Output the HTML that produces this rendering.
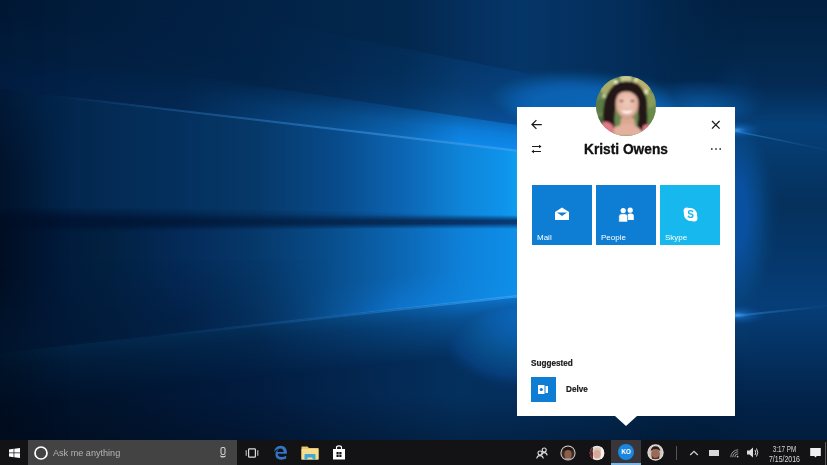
<!DOCTYPE html>
<html><head><meta charset="utf-8">
<style>
html,body{margin:0;padding:0;width:827px;height:465px;overflow:hidden;background:#0a2a52;font-family:"Liberation Sans",sans-serif;}
#wp{position:absolute;left:0;top:0;width:827px;height:440px;}
#flyout{position:absolute;left:517px;top:107px;width:218px;height:309px;background:#fff;}
#arrow{position:absolute;left:615px;top:416px;width:0;height:0;border-left:11px solid transparent;border-right:11px solid transparent;border-top:10px solid #fff;}
#tb{position:absolute;left:0;top:440px;width:827px;height:25px;background:#131315;}
.abs{position:absolute;}
.tile{position:absolute;top:185px;width:60px;height:60px;background:#0e7ed4;}
.tile span{position:absolute;left:5px;bottom:3.5px;color:#fff;font-size:8px;}
.name{position:absolute;left:517px;width:218px;top:140px;text-align:center;font-weight:bold;font-size:15px;color:#111;-webkit-text-stroke:0.35px #111;transform:scaleX(0.915);}
</style></head><body>
<svg id="wp" width="827" height="440" viewBox="0 0 827 440">
<defs>
<linearGradient id="gBase" x1="0" y1="0" x2="827" y2="0" gradientUnits="userSpaceOnUse"><stop offset="0.0000" stop-color="#011630"/><stop offset="0.1270" stop-color="#011c3c"/><stop offset="0.3083" stop-color="#022246"/><stop offset="0.4897" stop-color="#03284e"/><stop offset="0.5562" stop-color="#042e5c"/><stop offset="0.6288" stop-color="#053668"/><stop offset="0.7316" stop-color="#042e5c"/><stop offset="0.8888" stop-color="#022446"/><stop offset="1.0000" stop-color="#022042"/></linearGradient>
<linearGradient id="gBandA" x1="0" y1="0" x2="827" y2="0" gradientUnits="userSpaceOnUse"><stop offset="0.0000" stop-color="#021c3c"/><stop offset="0.3083" stop-color="#022449"/><stop offset="0.4051" stop-color="#042c58"/><stop offset="0.4897" stop-color="#05386c"/><stop offset="0.5562" stop-color="#0a4c8a"/><stop offset="0.6288" stop-color="#0a50a0"/><stop offset="1.0000" stop-color="#0a50a0"/></linearGradient>
<linearGradient id="gBandB" x1="0" y1="0" x2="827" y2="0" gradientUnits="userSpaceOnUse"><stop offset="0.0000" stop-color="#021e44"/><stop offset="0.2177" stop-color="#032852"/><stop offset="0.4051" stop-color="#084e8e"/><stop offset="0.4837" stop-color="#0c66b4"/><stop offset="0.5562" stop-color="#0e88ea"/><stop offset="0.6288" stop-color="#0e8cee"/><stop offset="1.0000" stop-color="#0e91f5"/></linearGradient>
<linearGradient id="gUp" x1="0" y1="0" x2="827" y2="0" gradientUnits="userSpaceOnUse"><stop offset="0.0000" stop-color="#021a3a"/><stop offset="0.0605" stop-color="#02244a"/><stop offset="0.1270" stop-color="#042a53"/><stop offset="0.2177" stop-color="#04305e"/><stop offset="0.3083" stop-color="#063868"/><stop offset="0.4051" stop-color="#084a8a"/><stop offset="0.4897" stop-color="#0c66b4"/><stop offset="0.5562" stop-color="#0e84d8"/><stop offset="0.6106" stop-color="#0e94eb"/><stop offset="0.6288" stop-color="#10a0f0"/><stop offset="1.0000" stop-color="#10a0f0"/></linearGradient>
<linearGradient id="gDark" x1="0" y1="0" x2="827" y2="0" gradientUnits="userSpaceOnUse"><stop offset="0.0000" stop-color="#011230"/><stop offset="0.0605" stop-color="#011230"/><stop offset="0.2177" stop-color="#011a3c"/><stop offset="0.4897" stop-color="#082c5a"/><stop offset="0.6288" stop-color="#0a3c78"/><stop offset="1.0000" stop-color="#0a3c78"/></linearGradient>
<linearGradient id="gLow" x1="0" y1="0" x2="827" y2="0" gradientUnits="userSpaceOnUse"><stop offset="0.0000" stop-color="#00122c"/><stop offset="0.0605" stop-color="#011a3c"/><stop offset="0.1270" stop-color="#022040"/><stop offset="0.2177" stop-color="#042a58"/><stop offset="0.3083" stop-color="#06386a"/><stop offset="0.4051" stop-color="#084f8e"/><stop offset="0.4897" stop-color="#0c68b6"/><stop offset="0.5562" stop-color="#0e80d8"/><stop offset="0.6106" stop-color="#0e8ce6"/><stop offset="0.6288" stop-color="#0e90ea"/><stop offset="1.0000" stop-color="#0e90ea"/></linearGradient>
<linearGradient id="gBot" x1="0" y1="0" x2="827" y2="0" gradientUnits="userSpaceOnUse"><stop offset="0.0000" stop-color="#011028"/><stop offset="0.1270" stop-color="#01142e"/><stop offset="0.2237" stop-color="#011838"/><stop offset="0.3083" stop-color="#021c40"/><stop offset="0.4051" stop-color="#03244c"/><stop offset="0.5562" stop-color="#04305e"/><stop offset="0.6288" stop-color="#042e5c"/><stop offset="0.7255" stop-color="#032a54"/><stop offset="0.8888" stop-color="#021e3e"/><stop offset="1.0000" stop-color="#021e3e"/></linearGradient>
<linearGradient id="gBotGlow" x1="0" y1="0" x2="827" y2="0" gradientUnits="userSpaceOnUse"><stop offset="0.0000" stop-color="#02203f"/><stop offset="0.3083" stop-color="#04305a"/><stop offset="0.4897" stop-color="#0a5aa0"/><stop offset="0.5562" stop-color="#0c6cc0"/><stop offset="0.6288" stop-color="#0e78d0"/><stop offset="1.0000" stop-color="#0e78d0"/></linearGradient>
<linearGradient id="gRight" x1="0" y1="0" x2="0" y2="440" gradientUnits="userSpaceOnUse"><stop offset="0.0000" stop-color="#022042"/><stop offset="0.0795" stop-color="#022446"/><stop offset="0.1932" stop-color="#042a54"/><stop offset="0.2841" stop-color="#054078"/><stop offset="0.4659" stop-color="#05305c"/><stop offset="0.6932" stop-color="#063e78"/><stop offset="0.9205" stop-color="#022248"/><stop offset="1.0000" stop-color="#021e3e"/></linearGradient>
<linearGradient id="mBand" x1="4.72" y1="49.8" x2="0" y2="89.5" gradientUnits="userSpaceOnUse"><stop offset="0" stop-color="#fff" stop-opacity="0"/><stop offset="0.35" stop-color="#fff" stop-opacity="0.45"/><stop offset="0.62" stop-color="#fff" stop-opacity="0.78"/><stop offset="1" stop-color="#fff" stop-opacity="1"/></linearGradient>
<radialGradient id="mDark2" cx="0" cy="0" r="1" gradientUnits="userSpaceOnUse" gradientTransform="translate(-450 220) scale(1000 15)"><stop offset="0" stop-color="#fff" stop-opacity="1"/><stop offset="0.45" stop-color="#fff" stop-opacity="1"/><stop offset="1" stop-color="#fff" stop-opacity="0"/></radialGradient>
<linearGradient id="gDark2" x1="0" y1="0" x2="827" y2="0" gradientUnits="userSpaceOnUse"><stop offset="0.0000" stop-color="#011230"/><stop offset="0.2177" stop-color="#011a3c"/><stop offset="0.4897" stop-color="#04305a"/><stop offset="1.0000" stop-color="#04305a"/></linearGradient>
<linearGradient id="mDark" x1="0" y1="215" x2="0" y2="229" gradientUnits="userSpaceOnUse"><stop offset="0" stop-color="#fff" stop-opacity="0"/><stop offset="0.4" stop-color="#fff" stop-opacity="1"/><stop offset="0.6" stop-color="#fff" stop-opacity="1"/><stop offset="1" stop-color="#fff" stop-opacity="0"/></linearGradient>
<linearGradient id="mBotGlow" x1="0" y1="353" x2="6.1" y2="407.7" gradientUnits="userSpaceOnUse"><stop offset="0" stop-color="#fff" stop-opacity="1"/><stop offset="0.3" stop-color="#fff" stop-opacity="0.55"/><stop offset="1" stop-color="#fff" stop-opacity="0"/></linearGradient>
<linearGradient id="mRight" x1="640" y1="0" x2="745" y2="0" gradientUnits="userSpaceOnUse"><stop offset="0" stop-color="#fff" stop-opacity="0"/><stop offset="1" stop-color="#fff" stop-opacity="1"/></linearGradient>
<linearGradient id="mVig" x1="0" y1="100" x2="0" y2="170" gradientUnits="userSpaceOnUse"><stop offset="0" stop-color="#fff" stop-opacity="0.2"/><stop offset="1" stop-color="#fff" stop-opacity="1"/></linearGradient>
<linearGradient id="mLowShade" x1="0" y1="270" x2="5" y2="335" gradientUnits="userSpaceOnUse"><stop offset="0" stop-color="#fff" stop-opacity="0"/><stop offset="1" stop-color="#fff" stop-opacity="0.8"/></linearGradient>
<linearGradient id="gLowShade" x1="0" y1="0" x2="827" y2="0" gradientUnits="userSpaceOnUse"><stop offset="0.0000" stop-color="#011630" stop-opacity="0.9"/><stop offset="0.2237" stop-color="#021e42" stop-opacity="0.9"/><stop offset="0.3990" stop-color="#03284e" stop-opacity="0"/></linearGradient>
<linearGradient id="mLowGlow" x1="0" y1="318" x2="3.9" y2="353" gradientUnits="userSpaceOnUse"><stop offset="0" stop-color="#fff" stop-opacity="0"/><stop offset="1" stop-color="#fff" stop-opacity="1"/></linearGradient>
<linearGradient id="gLowGlow" x1="0" y1="0" x2="827" y2="0" gradientUnits="userSpaceOnUse"><stop offset="0.0000" stop-color="#06305e" stop-opacity="0"/><stop offset="0.3023" stop-color="#06305e" stop-opacity="0"/><stop offset="0.4837" stop-color="#0e74cc"/><stop offset="0.6288" stop-color="#1090ea"/><stop offset="1.0000" stop-color="#1090ea"/></linearGradient>
<linearGradient id="mBandA" x1="400" y1="50.8" x2="390.1" y2="105.9" gradientUnits="userSpaceOnUse"><stop offset="0" stop-color="#fff" stop-opacity="0.3"/><stop offset="0.5" stop-color="#fff" stop-opacity="0.5"/><stop offset="1" stop-color="#fff" stop-opacity="1"/></linearGradient>
<mask id="maskBandA" maskUnits="userSpaceOnUse" x="-20" y="-20" width="867" height="480"><rect x="-20" y="-20" width="867" height="480" fill="url(#mBandA)"/></mask>
<mask id="maskBand" maskUnits="userSpaceOnUse" x="-20" y="-20" width="867" height="480"><rect x="-20" y="-20" width="867" height="480" fill="url(#mBand)"/></mask>
<mask id="maskDark" maskUnits="userSpaceOnUse" x="-20" y="-20" width="867" height="480"><rect x="-20" y="-20" width="867" height="480" fill="url(#mDark)"/></mask>
<mask id="maskBotGlow" maskUnits="userSpaceOnUse" x="-20" y="-20" width="867" height="480"><rect x="-20" y="-20" width="867" height="480" fill="url(#mBotGlow)"/></mask>
<mask id="maskDark2" maskUnits="userSpaceOnUse" x="-20" y="-20" width="867" height="480"><rect x="-20" y="-20" width="867" height="480" fill="url(#mDark2)"/></mask>
<mask id="maskRight" maskUnits="userSpaceOnUse" x="-20" y="-20" width="867" height="480"><rect x="-20" y="-20" width="867" height="480" fill="url(#mRight)"/></mask>
<mask id="maskVig" maskUnits="userSpaceOnUse" x="-20" y="-20" width="867" height="480"><rect x="-20" y="-20" width="867" height="480" fill="url(#mVig)"/></mask>
<mask id="maskLowShade" maskUnits="userSpaceOnUse" x="-20" y="-20" width="867" height="480"><rect x="-20" y="-20" width="867" height="480" fill="url(#mLowShade)"/></mask>
<mask id="maskLowGlow" maskUnits="userSpaceOnUse" x="-20" y="-20" width="867" height="480"><rect x="-20" y="-20" width="867" height="480" fill="url(#mLowGlow)"/></mask>
<radialGradient id="glow" cx="0.5" cy="0.5" r="0.5"><stop offset="0" stop-color="#4aa8f8" stop-opacity="0.8"/><stop offset="0.35" stop-color="#1a78d8" stop-opacity="0.45"/><stop offset="1" stop-color="#0a50a0" stop-opacity="0"/></radialGradient>
<radialGradient id="logo" cx="0.5" cy="0.5" r="0.5"><stop offset="0" stop-color="#0c66b8"/><stop offset="0.45" stop-color="#0a62b0"/><stop offset="0.55" stop-color="#0a5aa8"/><stop offset="0.68" stop-color="#074a88"/><stop offset="0.8" stop-color="#053a6c"/><stop offset="1" stop-color="#032a52" stop-opacity="0"/></radialGradient>
<radialGradient id="logo3" cx="0.5" cy="0.5" r="0.5"><stop offset="0" stop-color="#0a5aa8"/><stop offset="0.4" stop-color="#084a88"/><stop offset="0.85" stop-color="#043262"/><stop offset="1" stop-color="#043262" stop-opacity="0"/></radialGradient>
<radialGradient id="logo2" cx="0.5" cy="0.5" r="0.5"><stop offset="0" stop-color="#0c66b8"/><stop offset="0.3" stop-color="#0a5aa4"/><stop offset="0.5" stop-color="#08508e"/><stop offset="0.75" stop-color="#063e7a"/><stop offset="1" stop-color="#042854" stop-opacity="0"/></radialGradient>
<radialGradient id="logoR" cx="0.5" cy="0.5" r="0.5"><stop offset="0" stop-color="#0a50a0"/><stop offset="0.2" stop-color="#0a50a0"/><stop offset="0.5" stop-color="#07447e"/><stop offset="1" stop-color="#05305c" stop-opacity="0"/></radialGradient>
<linearGradient id="lnUp" x1="48" y1="0" x2="520" y2="0" gradientUnits="userSpaceOnUse"><stop offset="0" stop-color="#2a70b8" stop-opacity="0"/><stop offset="0.3" stop-color="#2a70b8" stop-opacity="0.45"/><stop offset="1" stop-color="#3aa0f0" stop-opacity="0.9"/></linearGradient>
<linearGradient id="lnLow" x1="150" y1="0" x2="520" y2="0" gradientUnits="userSpaceOnUse"><stop offset="0" stop-color="#2a70b8" stop-opacity="0"/><stop offset="0.5" stop-color="#2a80d0" stop-opacity="0.5"/><stop offset="1" stop-color="#40b0ff" stop-opacity="0.95"/></linearGradient>
<filter id="bd" x="-5%" y="-100%" width="110%" height="300%"><feGaussianBlur stdDeviation="2.2"/></filter>
<linearGradient id="lnR" x1="735" y1="0" x2="827" y2="0" gradientUnits="userSpaceOnUse"><stop offset="0" stop-color="#3a9ae8" stop-opacity="0.55"/><stop offset="1" stop-color="#2a70b8" stop-opacity="0.05"/></linearGradient>
<linearGradient id="botDark" x1="0" y1="395" x2="0" y2="440" gradientUnits="userSpaceOnUse"><stop offset="0" stop-color="#000814" stop-opacity="0"/><stop offset="1" stop-color="#000814" stop-opacity="0.3"/></linearGradient>
<linearGradient id="vig" x1="0" y1="0" x2="70" y2="0" gradientUnits="userSpaceOnUse"><stop offset="0" stop-color="#000a18" stop-opacity="0.45"/><stop offset="1" stop-color="#000a18" stop-opacity="0"/></linearGradient>
</defs>
  <rect width="827" height="440" fill="url(#gBase)"/>
  <polygon points="-20,-37 847,138 847,190 -20,87" fill="url(#gBandA)" mask="url(#maskBandA)"/>
  <polygon points="-20,43.5 847,175 847,190 -20,87" fill="url(#gBandB)" mask="url(#maskBand)"/>
  <polygon points="-20,87 847,190 847,219 -20,219" fill="url(#gUp)"/>
  <polygon points="-20,219 847,219 847,277 -20,355" fill="url(#gLow)"/>
  <rect x="-20" y="205" width="867" height="35" fill="url(#gDark)" mask="url(#maskDark)"/>
  <rect x="-20" y="190" width="867" height="60" fill="url(#gDark2)" mask="url(#maskDark2)"/>
  <polygon points="-20,250 847,250 847,260 -20,355" fill="url(#gLowGlow)" mask="url(#maskLowGlow)" style="mix-blend-mode:lighten"/>
  <polygon points="-20,355 847,260 847,460 -20,460" fill="url(#gBot)"/>
  <polygon points="-20,355 847,260 847,460 -20,460" fill="url(#gBotGlow)" mask="url(#maskBotGlow)"/>
  <line x1="30" y1="93" x2="520" y2="151" stroke="url(#lnUp)" stroke-width="2.2"/>
  <line x1="150" y1="337" x2="520" y2="296" stroke="url(#lnLow)" stroke-width="2.5" opacity="0.7"/>
  <rect x="0" y="0" width="70" height="440" fill="url(#vig)" mask="url(#maskVig)"/>
  <rect x="0" y="395" width="827" height="45" fill="url(#botDark)"/>
  <polygon points="-20,260 400,260 400,308 -20,355" fill="url(#gLowShade)" mask="url(#maskLowShade)"/>
  <rect x="640" y="0" width="187" height="440" fill="url(#gRight)" mask="url(#maskRight)"/>
  <ellipse cx="0" cy="0" rx="150" ry="48" fill="url(#logo)" style="mix-blend-mode:lighten" transform="translate(600 114) rotate(8)"/>
  <ellipse cx="700" cy="110" rx="80" ry="30" fill="url(#logo3)" style="mix-blend-mode:lighten"/>
  <ellipse cx="517" cy="316" rx="95" ry="80" fill="url(#logo2)" style="mix-blend-mode:lighten"/>
  <ellipse cx="737" cy="215" rx="48" ry="160" fill="url(#logoR)" style="mix-blend-mode:lighten"/>
  <line x1="735" y1="316" x2="827" y2="306" stroke="url(#lnR)" stroke-width="2"/>
  <line x1="735" y1="131" x2="827" y2="150" stroke="url(#lnR)" stroke-width="1.5"/>
  <ellipse cx="737" cy="130" rx="26" ry="9" fill="url(#glow)"/>
  <ellipse cx="737" cy="315" rx="30" ry="10" fill="url(#glow)"/>
</svg>
<div id="flyout"></div>
<div id="arrow"></div>

<!-- profile picture -->
<svg class="abs" style="left:596px;top:76px" width="60" height="60" viewBox="0 0 60 60">
  <defs>
    <clipPath id="cc"><circle cx="30" cy="30" r="30"/></clipPath>
    <filter id="pb" x="-10%" y="-10%" width="120%" height="120%"><feGaussianBlur stdDeviation="0.8"/></filter>
    <radialGradient id="face" cx="0.5" cy="0.45" r="0.55"><stop offset="0" stop-color="#f0cbbb"/><stop offset="0.75" stop-color="#e4b4a0"/><stop offset="1" stop-color="#c89482"/></radialGradient>
  </defs>
  <g clip-path="url(#cc)">
    <rect width="60" height="60" fill="#6a8650"/>
    <g filter="url(#pb)">
      <circle cx="12" cy="10" r="9" fill="#a8ac6a"/>
      <circle cx="46" cy="8" r="10" fill="#b8b070"/>
      <circle cx="53" cy="24" r="8" fill="#8a9a58"/>
      <circle cx="5" cy="30" r="7" fill="#5c7a44"/>
      <circle cx="55" cy="40" r="7" fill="#6a8a48"/>
      <circle cx="6" cy="46" r="6" fill="#4e6a3c"/>
      <circle cx="30" cy="2" r="6" fill="#c8c890"/>
      <circle cx="20" cy="6" r="2.2" fill="#f0ecd0"/>
      <circle cx="40" cy="4" r="2" fill="#e8e0b0"/>
      <circle cx="50" cy="16" r="2.2" fill="#f0e8b8"/>
      <circle cx="8" cy="20" r="1.8" fill="#e0e0c0"/>
      <path d="M8 52 Q4 22 18 9 Q30 2 42 8 Q53 18 51 34 Q53 48 48 56 L40 56 Q45 40 41 30 L20 30 Q16 44 20 56Z" fill="#241814"/>
      <path d="M31 42 L25 42 L22 60 L42 60 L38 42Z" fill="#dca892"/>
      <ellipse cx="31" cy="28" rx="11.5" ry="15" fill="url(#face)"/>
      <path d="M19 22 Q23 10 34 11 Q42 14 43 24 Q38 15 30 15.5 Q22 16 19 22Z" fill="#241814"/>
      <path d="M12 60 Q15 49 31 48 Q45 49 48 60Z" fill="#e2b09c"/>
      <path d="M2 60 L7 46 Q13 45 17 50 L19 60Z" fill="#e27a88"/>
      <path d="M45 60 L47 50 Q51 47 55 50 L58 60Z" fill="#e27a88"/>
      <ellipse cx="25.5" cy="25" rx="2" ry="1" fill="#5a3a30"/>
      <ellipse cx="36.5" cy="25" rx="2" ry="1" fill="#5a3a30"/>
      <path d="M24 34 Q31 41 38 34 Q31 36.5 24 34Z" fill="#fff"/>
    </g>
  </g>
</svg>
<!-- header icons -->
<svg class="abs" style="left:530px;top:119px" width="14" height="12" viewBox="0 0 14 12">
  <path d="M2.2 5.5H11.8M6.4 1.1L2 5.5L6.4 9.9" stroke="#1a1a1a" stroke-width="1.25" fill="none"/>
</svg>
<svg class="abs" style="left:709px;top:118px" width="13" height="13" viewBox="0 0 13 13">
  <path d="M3 3L10.6 10.6M10.6 3L3 10.6" stroke="#1a1a1a" stroke-width="1.25" fill="none"/>
</svg>
<svg class="abs" style="left:530px;top:143px" width="13" height="12" viewBox="0 0 13 12">
  <path d="M2 3.5H10M3 8.5H11" stroke="#1a1a1a" stroke-width="1.2" fill="none"/>
  <path d="M9 1.8L11.6 3.5L9 5.2Z M4 6.8L1.4 8.5L4 10.2Z" fill="#1a1a1a"/>
</svg>
<div class="name">Kristi Owens</div>
<svg class="abs" style="left:709px;top:146px" width="14" height="6" viewBox="0 0 14 6">
  <circle cx="2.8" cy="3" r="0.95" fill="#444"/><circle cx="7" cy="3" r="0.95" fill="#444"/><circle cx="11.2" cy="3" r="0.95" fill="#444"/>
</svg>

<!-- tiles -->
<div class="tile" style="left:532px"><span>Mail</span>
  <svg class="abs" style="left:22px;top:22px" width="16" height="14" viewBox="0 0 16 14">
    <path d="M1 5L8 0.5L15 5V13H1Z" fill="#fff"/>
    <path d="M3 5.5H13L8 9Z" fill="#0e7ed4"/>
  </svg>
</div>
<div class="tile" style="left:596px"><span>People</span>
  <svg class="abs" style="left:22px;top:22px" width="17" height="16" viewBox="0 0 17 16">
    <circle cx="12.2" cy="3.2" r="2.6" fill="#fff"/>
    <path d="M9.5 13V8.6Q9.5 6.4 11.8 6.4H13Q15.8 6.4 15.8 9.2V13Z" fill="#fff"/>
    <circle cx="5.2" cy="3.6" r="3" fill="#0e7ed4"/>
    <circle cx="5.2" cy="3.6" r="2.6" fill="#fff"/>
    <path d="M0.8 15V9.6Q0.8 6.8 3.6 6.8H6.8Q9.6 6.8 9.6 9.6V15Z" fill="#fff" stroke="#0e7ed4" stroke-width="0.6"/>
  </svg>
</div>
<div class="tile" style="left:660px;background:#16b8ee"><span>Skype</span>
  <svg class="abs" style="left:23px;top:22px" width="15" height="15" viewBox="0 0 15 15">
    <path d="M4 0.5A3.5 3.5 0 0 0 0.5 4Q0.5 5 1 6A7 7 0 0 0 9 14Q10 14.5 11 14.5A3.5 3.5 0 0 0 14.5 11Q14.5 10 14 9A7 7 0 0 0 6 1Q5 0.5 4 0.5Z" fill="#fff"/>
    <text x="7.5" y="11" text-anchor="middle" font-family="Liberation Sans" font-weight="bold" font-size="10" fill="#16b8ee">S</text>
  </svg>
</div>

<div class="abs" style="left:531px;top:357.5px;font-size:8.6px;font-weight:bold;color:#1a1a1a;-webkit-text-stroke:0.2px #1a1a1a;transform:scaleX(0.95);transform-origin:left">Suggested</div>
<div class="abs" style="left:531px;top:377px;width:25px;height:25px;background:#0e7ed4">
  <svg class="abs" style="left:7px;top:7px" width="11" height="11" viewBox="0 0 11 11">
    <rect x="0" y="1" width="6.5" height="9" fill="#fff"/>
    <rect x="7.5" y="2" width="2.5" height="7" fill="#fff"/>
    <circle cx="3.3" cy="5.5" r="1.6" fill="#0e7ed4"/>
  </svg>
</div>
<div class="abs" style="left:566px;top:384px;font-size:8.6px;font-weight:bold;color:#1a1a1a;-webkit-text-stroke:0.2px #1a1a1a;transform:scaleX(0.95);transform-origin:left">Delve</div>

<!-- taskbar -->
<div id="tb">
  <svg class="abs" style="left:9px;top:8px" width="11" height="10" viewBox="0 0 11 10">
    <path d="M0 1.4L4.6 0.8V4.6H0ZM5.3 0.7L11 0V4.6H5.3ZM0 5.3H4.6V9.2L0 8.6ZM5.3 5.3H11V10L5.3 9.3Z" fill="#fff"/>
  </svg>
  <div class="abs" style="left:28px;top:0;width:209px;height:25px;background:#434343"></div>
  <svg class="abs" style="left:34px;top:6px" width="14" height="14" viewBox="0 0 14 14">
    <circle cx="7" cy="7" r="6" stroke="#fff" stroke-width="1.7" fill="none"/>
  </svg>
  <div class="abs" style="left:53px;top:8px;font-size:9.1px;color:#b4b4b4">Ask me anything</div>
  <svg class="abs" style="left:219px;top:7px" width="8" height="11" viewBox="0 0 8 11">
    <rect x="2" y="0.5" width="4" height="7" rx="1.6" stroke="#cfcfcf" stroke-width="1.1" fill="none"/>
    <path d="M1 8.2Q1.2 10.5 4 10.5Q6.8 10.5 7 8.2Q5.5 9.2 4 9.2Q2.5 9.2 1 8.2Z" fill="#dcdcdc"/>
  </svg>
  <svg class="abs" style="left:245px;top:8px" width="14" height="10" viewBox="0 0 14 10">
    <rect x="3.6" y="0.8" width="6.8" height="8.4" rx="0.8" stroke="#dcdcdc" stroke-width="1.2" fill="none"/>
    <path d="M1.2 2.2V7.8M12.8 2.2V7.8" stroke="#cfcfcf" stroke-width="1"/>
  </svg>
  <!-- edge -->
  <svg class="abs" style="left:273px;top:5px" width="15" height="15" viewBox="0 0 15 15">
    <path d="M1 7.2Q1.8 1.2 7.8 0.8Q13.6 1 13.9 7.6V8.8H4.6Q4.9 11.9 8.4 12.1Q11 12.1 13.2 10.8V13.6Q11.2 14.7 8.2 14.7Q2.6 14.5 2.4 9.2Q2.6 5.6 5.8 4.2Q4 5.8 4.4 7H10.6Q10.5 3.8 7.6 3.6Q3.6 3.6 1 7.2Z" fill="#3276c8"/>
  </svg>
  <!-- explorer -->
  <svg class="abs" style="left:301px;top:6px" width="18" height="14" viewBox="0 0 18 14">
    <path d="M0.5 0.5H6.5L8 2H17.5V13.5H0.5Z" fill="#e8c86a"/>
    <rect x="0.5" y="3" width="17" height="10.5" fill="#f6de8e"/>
    <path d="M3.5 13.5V9Q3.5 8 4.5 8H13.5Q14.5 8 14.5 9V13.5H11.5V11.5H6.5V13.5Z" fill="#40a8d8"/>
  </svg>
  <!-- store -->
  <svg class="abs" style="left:332px;top:5px" width="14" height="15" viewBox="0 0 14 15">
    <path d="M4.5 4V2.5Q4.5 0.8 7 0.8Q9.5 0.8 9.5 2.5V4" stroke="#fff" stroke-width="1.2" fill="none"/>
    <path d="M1 4H13V14.5H1Z" fill="#fff"/>
    <path d="M4.5 7H6.7V9.2H4.5ZM7.3 7H9.5V9.2H7.3ZM4.5 9.8H6.7V12H4.5ZM7.3 9.8H9.5V12H7.3Z" fill="#111"/>
  </svg>

  <!-- people icon -->
  <svg class="abs" style="left:536px;top:7px" width="12" height="12" viewBox="0 0 12 12">
    <circle cx="8.2" cy="3" r="2" stroke="#e0e0e0" stroke-width="1.1" fill="none"/>
    <path d="M5.6 8.2Q6.2 5.6 8.2 5.6Q10.6 5.6 11.2 8.4" stroke="#e0e0e0" stroke-width="1.1" fill="none"/>
    <circle cx="4" cy="6" r="2" stroke="#e0e0e0" stroke-width="1.1" fill="none"/>
    <path d="M0.7 11.5Q1.2 8.6 4 8.6Q6.8 8.6 7.3 11.5" stroke="#e0e0e0" stroke-width="1.1" fill="none"/>
  </svg>
  <!-- avatars -->
  <svg class="abs" style="left:560px;top:5px" width="16" height="16" viewBox="0 0 16 16">
    <defs><clipPath id="av"><circle cx="8" cy="8" r="6.6"/></clipPath></defs>
    <circle cx="8" cy="8" r="7.6" fill="#d8d0c8"/>
    <g clip-path="url(#av)"><rect width="16" height="16" fill="#3a2c26"/>
      <ellipse cx="8" cy="9.5" rx="3.6" ry="4.5" fill="#8a5e48"/>
      <path d="M3 6Q4 2 8 2Q12 2 13 6Q10 4.5 8 4.5Q6 4.5 3 6Z" fill="#1e1412"/>
      <rect x="3" y="13.5" width="10" height="3" fill="#c8b8b0"/></g>
  </svg>
  <svg class="abs" style="left:589px;top:5px" width="16" height="16" viewBox="0 0 16 16">
    <defs><clipPath id="av2"><circle cx="8" cy="8" r="7.3"/></clipPath></defs>
    <g clip-path="url(#av2)"><rect width="16" height="16" fill="#e8e0dc"/>
      <rect x="0" y="0" width="4" height="16" fill="#5a2a30"/>
      <ellipse cx="8" cy="9" rx="3.8" ry="4.6" fill="#d8a898"/>
      <path d="M3.5 7Q4 2.5 8.5 2.5Q13 3 12.5 8Q11 5 8 5Q5.5 5 3.5 7Z" fill="#d8c8b8"/>
      <rect x="12" y="2" width="4" height="12" fill="#f4f0ee"/></g>
  </svg>
  <div class="abs" style="left:611px;top:0;width:30px;height:25px;background:#38363a"></div>
  <div class="abs" style="left:611px;top:23px;width:30px;height:2px;background:#78b4e4"></div>
  <div class="abs" style="left:618px;top:4px;width:16px;height:16px;border-radius:50%;background:#1a86e0;color:#fff;font-size:6.5px;font-weight:bold;line-height:16px;text-align:center">KO</div>
  <svg class="abs" style="left:647px;top:4px" width="17" height="17" viewBox="0 0 16 16">
    <defs><clipPath id="av4"><circle cx="8" cy="8" r="6.8"/></clipPath></defs>
    <circle cx="8" cy="8" r="7.7" fill="#e4dcd8"/>
    <g clip-path="url(#av4)"><rect width="16" height="16" fill="#d0c8c4"/>
      <ellipse cx="8" cy="9.5" rx="4.2" ry="5" fill="#9a6a54"/>
      <path d="M3.5 6.5Q4 2 8 2Q12 2 12.5 6.5Q10 4.5 8 4.6Q6 4.5 3.5 6.5Z" fill="#2a1c18"/>
      <path d="M4.5 11Q8 15.5 11.5 11L11.5 14L4.5 14Z" fill="#4a3228"/></g>
  </svg>
  <div class="abs" style="left:676px;top:6px;width:1px;height:14px;background:#555"></div>
  <svg class="abs" style="left:689px;top:10px" width="10" height="6" viewBox="0 0 10 6">
    <path d="M1.2 5L5 1.3L8.8 5" stroke="#cfcfcf" stroke-width="1.3" fill="none"/>
  </svg>
  <div class="abs" style="left:709px;top:10px;width:10px;height:5.5px;background:#d8d8d8"></div>
  <svg class="abs" style="left:730px;top:9px" width="9" height="9" viewBox="0 0 9 9">
    <path d="M0.8 8.2A7.4 7.4 0 0 1 8.2 0.8M2.8 8.2A5.4 5.4 0 0 1 8.2 2.8M4.8 8.2A3.4 3.4 0 0 1 8.2 4.8" stroke="#9a9a9a" stroke-width="1" fill="none"/>
    <circle cx="7.6" cy="7.6" r="0.9" fill="#bbb"/>
  </svg>
  <svg class="abs" style="left:746px;top:6px" width="13" height="13" viewBox="0 0 13 13">
    <path d="M1 4.5H3.5L7 1.5V11.5L3.5 8.5H1Z" fill="#ddd"/>
    <path d="M9 4Q10.5 6.5 9 9M10.5 2.5Q13 6.5 10.5 10.5" stroke="#ddd" stroke-width="1" fill="none"/>
  </svg>
  <div class="abs" style="left:764px;top:5px;width:41px;text-align:center;font-size:8.6px;line-height:9px;color:#d8d8d8;transform:scaleX(0.73)">3:17 PM</div>
  <div class="abs" style="left:764px;top:14.5px;width:41px;text-align:center;font-size:8.5px;line-height:9px;color:#d8d8d8;transform:scaleX(0.82)">7/15/2016</div>
  <svg class="abs" style="left:809px;top:6px" width="13" height="13" viewBox="0 0 13 13">
    <path d="M1.2 2H11.8V10H7.8L6.5 11.4L5.2 10H1.2Z" fill="#f0f0f0"/>
  </svg>
  <div class="abs" style="left:825px;top:2px;width:1px;height:23px;background:#5a5a5a"></div>
</div>
</body></html>
